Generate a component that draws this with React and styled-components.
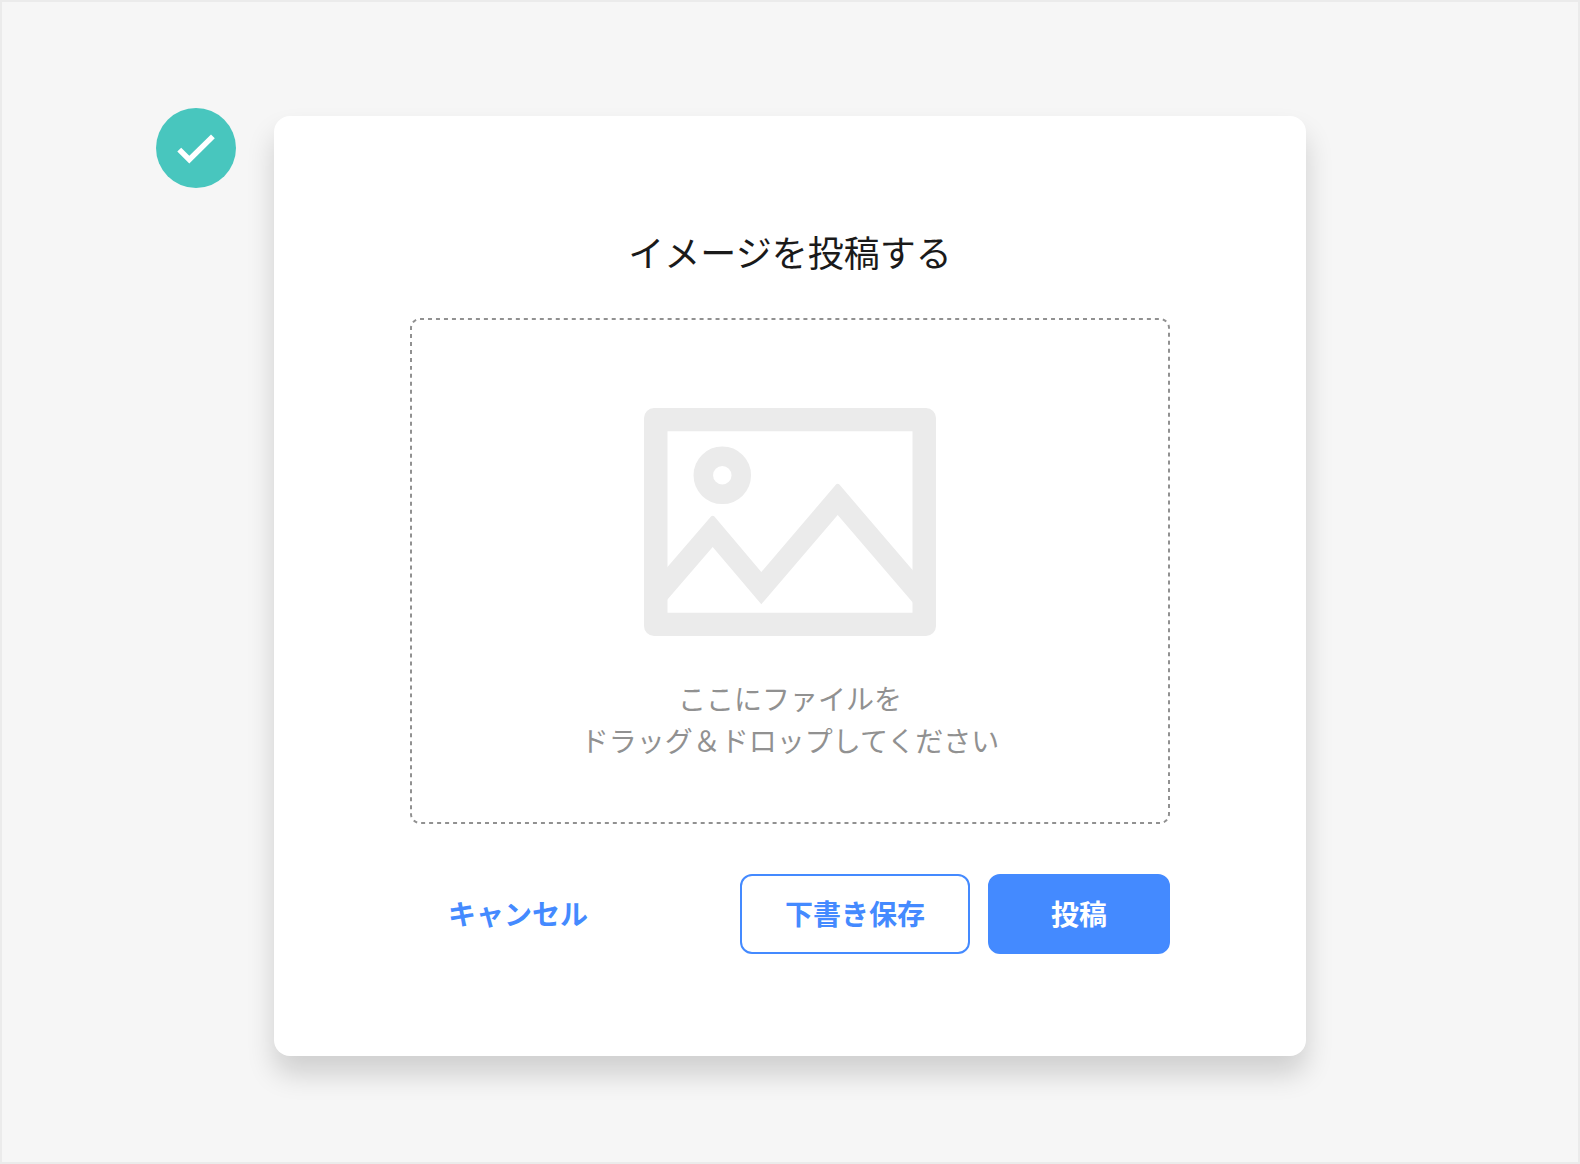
import React, { useState } from "react";
import styled, { createGlobalStyle, css } from "styled-components";

const GlobalStyle = createGlobalStyle`
  * {
    box-sizing: border-box;
  }
  body {
    margin: 0;
    font-family: "Noto Sans CJK JP", "Noto Sans", sans-serif;
    color: #1a1a1a;
  }
`;

const Page = styled.div`
  display: grid;
  grid-template-columns: 1fr minmax(0, 1032px) 1fr;
  align-items: start;
  min-height: 100vh;
  padding: 106px 0;
  background: #f6f6f6;
  border: 2px solid #ebebeb;
`;
const Badge = styled.div`
  display: flex;
  align-items: center;
  justify-content: center;
  justify-self: end;
  width: 80px;
  height: 80px;
  margin-right: 38px;
  border-radius: 50%;
  background: #48c6be;
`;
const Modal = styled.form`
  margin-top: 8px;
  padding: 108px 136px 102px;
  border-radius: 16px;
  background: white;
  box-shadow: 0 18px 28px rgba(0, 0, 0, 0.16);
`;
const Title = styled.h1`
  margin: 0 0 40px;
  font-size: 36px;
  font-weight: 400;
  line-height: 54px;
  text-align: center;
`;
const DropZone = styled.label`
  position: relative;
  display: flex;
  flex-direction: column;
  align-items: center;
  padding: 90px 20px 63px;
  border-radius: 10px;
  background: ${(props) => (props.$active ? "#f2f7ff" : "white")};
  cursor: pointer;
`;
const DashedOutline = styled.svg`
  position: absolute;
  inset: 0;
  width: 100%;
  height: 100%;
  pointer-events: none;

  rect {
    width: calc(100% - 2px);
    height: calc(100% - 2px);
    fill: none;
    stroke: #919191;
    stroke-width: 2px;
    stroke-dasharray: 4 4;
  }
`;
const FileInput = styled.input`
  position: absolute;
  width: 1px;
  height: 1px;
  opacity: 0;
`;
const DropText = styled.span`
  margin-top: 41px;
  font-size: 28px;
  line-height: 42px;
  color: #919191;
  text-align: center;
`;
const Actions = styled.div`
  display: flex;
  gap: 18px;
  margin-top: 50px;
`;
const Button = styled.button`
  height: 80px;
  padding: 0 36px 2px;
  border: 2px solid transparent;
  border-radius: 12px;
  background: transparent;
  font-family: inherit;
  font-size: 28px;
  font-weight: 700;
  line-height: 42px;
  color: #448aff;
  cursor: pointer;

  ${(props) =>
    props.$variant === "text" &&
    css`
      margin-right: auto;
    `}
  ${(props) =>
    props.$variant === "outline" &&
    css`
      padding: 0 43px 2px;
      border-color: #448aff;
    `}
  ${(props) =>
    props.$variant === "primary" &&
    css`
      padding: 0 61px 2px;
      border-color: #448aff;
      background: #448aff;
      color: white;
    `}
`;

const CheckIcon = () => (
  <svg width="50" height="50" viewBox="0 0 50 50" fill="white" aria-hidden="true">
    <path d="M6.3 28.5L10.2 24.7L18.3 32.8L40 11.4L43.8 15.2L18.3 40.5Z" />
  </svg>
);

const PictureIcon = () => (
  <svg width="292" height="228" viewBox="0 0 292 228" fill="#ebebeb" aria-hidden="true">
    <path
      fillRule="evenodd"
      d="M10 0H282A10 10 0 0 1 292 10V218A10 10 0 0 1 282 228H10A10 10 0 0 1 0 218V10A10 10 0 0 1 10 0ZM23.5 23.3V204.7H268.5V23.3Z"
    />
    <circle cx="78.3" cy="67.3" r="19" fill="none" stroke="#ebebeb" strokeWidth="19.5" />
    <path d="M23 159.4L67 108.6Q68.7 107 70.4 108.6L117.3 164L192 76.6Q193.7 75 195.4 76.6L269 162.6V194.8L193.7 107L117.3 196.2L68.7 139L23 191.9Z" />
  </svg>
);

const App = () => {
  const [dragging, setDragging] = useState(false);

  const handleDrag = (e, active) => {
    e.preventDefault();
    setDragging(active);
  };

  return (
    <>
      <GlobalStyle />
      <Page>
        <Badge>
          <CheckIcon />
        </Badge>
        <Modal onSubmit={(e) => e.preventDefault()}>
          <Title>イメージを投稿する</Title>
          <DropZone
            htmlFor="image-file"
            $active={dragging}
            onDragOver={(e) => handleDrag(e, true)}
            onDragLeave={(e) => handleDrag(e, false)}
            onDrop={(e) => handleDrag(e, false)}
          >
            <DashedOutline aria-hidden="true">
              {/* a multiple of the dash period, so the outline closes on a gap */}
              <rect x="1" y="1" rx="9" pathLength="2512" />
            </DashedOutline>
            <FileInput id="image-file" type="file" accept="image/*" />
            <PictureIcon />
            <DropText>
              ここにファイルを
              <br />
              ドラッグ＆ドロップしてください
            </DropText>
          </DropZone>
          <Actions>
            <Button type="button" $variant="text">
              キャンセル
            </Button>
            <Button type="button" $variant="outline">
              下書き保存
            </Button>
            <Button type="submit" $variant="primary">
              投稿
            </Button>
          </Actions>
        </Modal>
      </Page>
    </>
  );
};

export default App;
